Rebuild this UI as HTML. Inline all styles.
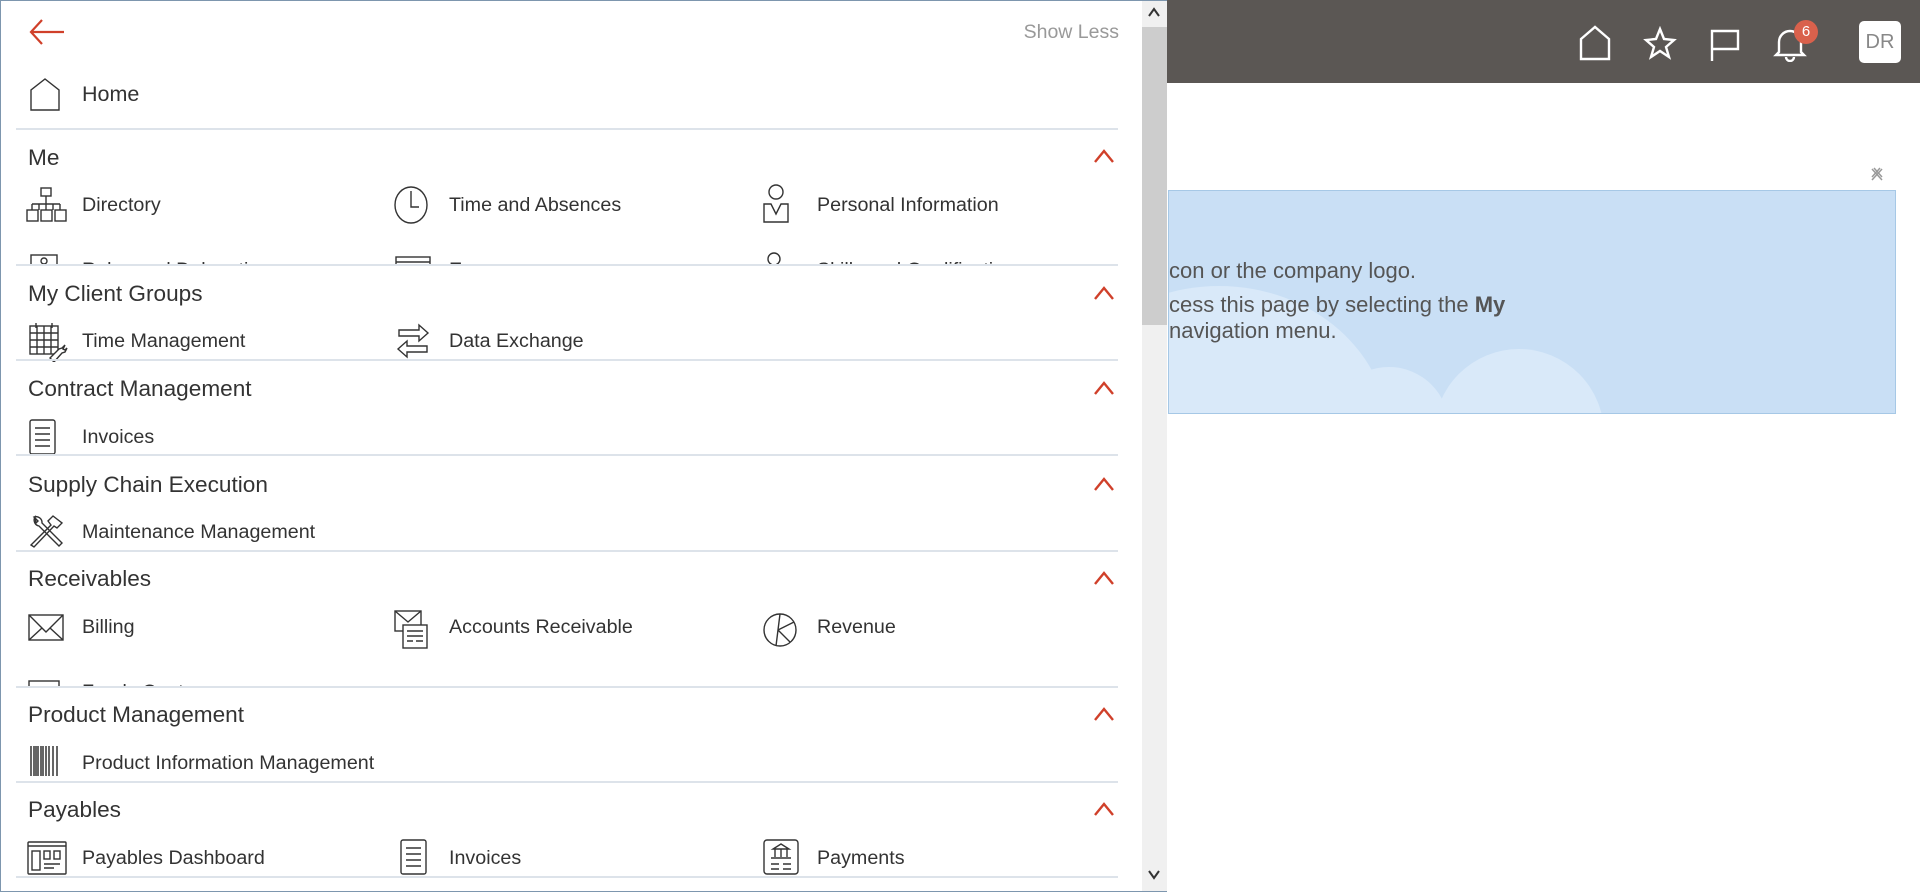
<!DOCTYPE html>
<html><head><meta charset="utf-8">
<style>
*{margin:0;padding:0;box-sizing:border-box}
body{width:1920px;height:892px;overflow:hidden;background:#fff;font-family:"Liberation Sans",Arial,sans-serif;color:#333;position:relative}
.abs{position:absolute}
.topbar{left:1167px;top:0;width:753px;height:83px;background:#5b5754}
.blue{left:1168px;top:190px;width:728px;height:224px;background:#c9dff5;border:1px solid #a6c8e6;overflow:hidden}
.cl{position:absolute;border-radius:50%;background:#d9e9f9}
.msg{font-size:22px;color:#555;white-space:nowrap}
.panel{left:0;top:0;width:1167px;height:892px;background:#fff;border:1px solid #7d96ae;border-right:none}
.sb{left:1142px;top:1px;width:25px;height:890px;background:#f0f0f0}
.thumb{left:1142px;top:27px;width:25px;height:298px;background:#cdcdcd}
.div{position:absolute;left:16px;width:1102px;height:2px;background:#dde3ea}
.sec{position:absolute;left:28px;font-size:22.6px;color:#333;line-height:26px}
.chev{position:absolute;left:1092px}
.it{position:absolute;font-size:19.7px;line-height:24px;color:#333;white-space:nowrap;margin-top:2px}
.clip{position:absolute;left:0;width:1142px;overflow:hidden}
svg.ic{position:absolute;fill:none;stroke:#333;stroke-width:1.4}
</style></head><body>

<div class="abs topbar"></div>
<svg class="abs" style="left:1578px;top:25px" width="34" height="36" viewBox="0 0 34 36" fill="none" stroke="#fff" stroke-width="2.4"><path d="M3 34V14L17 2 31 14V34Z"/></svg>
<svg class="abs" style="left:1643px;top:26px" width="34" height="34" viewBox="0 0 34 34" fill="none" stroke="#fff" stroke-width="2.4"><path d="M17 3l4 10 10 1-8 7 3 10-9-6-9 6 3-10-8-7 10-1z"/></svg>
<svg class="abs" style="left:1709px;top:28px" width="32" height="34" viewBox="0 0 32 34" fill="none" stroke="#fff" stroke-width="2.4"><path d="M3 33V3h26v18H3"/></svg>
<svg class="abs" style="left:1773px;top:26px" width="34" height="36" viewBox="0 0 34 36" fill="none" stroke="#fff" stroke-width="2.4"><path d="M6 26V16a11 11 0 0 1 22 0v10l3 3H3z"/><path d="M13 31a4 4 0 0 0 8 0"/></svg>
<div class="abs" style="left:1794px;top:20px;width:24px;height:24px;border-radius:50%;background:#d9614c;color:#fff;font-size:15px;text-align:center;line-height:24px">6</div>
<div class="abs" style="left:1859px;top:21px;width:42px;height:42px;border-radius:5px;background:#fff;color:#888;font-size:20px;text-align:center;line-height:42px">DR</div>

<div class="abs blue">
  <div class="cl" style="left:-120px;top:95px;width:340px;height:300px"></div>
  <div class="cl" style="left:160px;top:176px;width:120px;height:120px"></div>
  <div class="cl" style="left:265px;top:158px;width:170px;height:170px"></div>
  <div class="abs msg" style="left:0;top:67px">con or the company logo.</div>
  <div class="abs msg" style="left:0;top:101px">cess this page by selecting the <b>My</b></div>
  <div class="abs msg" style="left:0;top:127px">navigation menu.</div>
</div>
<svg class="abs" style="left:1870px;top:167px" width="14" height="15" viewBox="0 0 14 15" fill="none" stroke="#999" stroke-width="1.5"><path d="M2 2l10 11M12 2L2 13M4 1l8 9M10 1L2 10"/></svg>

<div class="abs panel"></div>
<div class="abs sb"></div>
<div class="abs thumb"></div>
<svg class="abs" style="left:1146px;top:6px" width="16" height="12" viewBox="0 0 16 12" fill="none" stroke="#333" stroke-width="2"><path d="M3 10L8 3l5 7"/></svg>
<svg class="abs" style="left:1146px;top:869px" width="16" height="12" viewBox="0 0 16 12" fill="none" stroke="#333" stroke-width="2"><path d="M3 2l5 7 5-7"/></svg>

<svg class="abs" style="left:28px;top:18px" width="38" height="28" viewBox="0 0 38 28" fill="none" stroke="#d0402a" stroke-width="2.2"><path d="M36 14H3M14 2L3 14l11 12"/></svg>
<div class="abs" style="left:990px;top:21px;width:129px;text-align:right;font-size:19.5px;color:#999">Show Less</div>

<svg class="ic" style="left:29px;top:78px" width="36" height="34" viewBox="0 0 36 34"><path d="M2 32V12L16 1 30 12V32Z"/></svg>
<div class="it" style="left:82px;top:80px;font-size:21.5px">Home</div>
<div class="div" style="top:128px"></div>

<div class="clip" style="top:130px;height:135px">
 <div class="sec" style="top:15px">Me</div>
 <svg class="ic" style="left:25px;top:57px" width="44" height="36" viewBox="0 0 44 36"><rect x="16" y="1" width="10" height="8"/><path d="M21 9v8M7 17h28M7 17v6M21 17v6M35 17v6M14 17v6M28 17v6"/><rect x="2" y="23" width="11" height="11"/><rect x="16" y="23" width="11" height="11"/><rect x="30" y="23" width="11" height="11"/></svg>
 <div class="it" style="left:82px;top:61px">Directory</div>
 <svg class="ic" style="left:393px;top:55px" width="38" height="40" viewBox="0 0 38 40"><ellipse cx="18" cy="20" rx="16" ry="18"/><path d="M18 6v16h8"/></svg>
 <div class="it" style="left:449px;top:61px">Time and Absences</div>
 <svg class="ic" style="left:761px;top:54px" width="30" height="40" viewBox="0 0 30 40"><circle cx="15" cy="8" r="7"/><path d="M3 38V20h7l5 10 5-10h7v18z"/></svg>
 <div class="it" style="left:817px;top:61px">Personal Information</div>
 <svg class="ic" style="left:29px;top:123px" width="32" height="20" viewBox="0 0 32 20"><rect x="2" y="2" width="26" height="20"/><circle cx="15" cy="8" r="3"/></svg>
 <div class="it" style="left:82px;top:126px">Roles and Delegations</div>
 <svg class="ic" style="left:394px;top:125px" width="40" height="20" viewBox="0 0 40 20"><rect x="2" y="2" width="34" height="20"/><path d="M2 7h34"/></svg>
 <div class="it" style="left:449px;top:126px">Expenses</div>
 <svg class="ic" style="left:762px;top:120px" width="30" height="20" viewBox="0 0 30 20"><circle cx="12" cy="9" r="6"/></svg>
 <div class="it" style="left:817px;top:126px">Skills and Qualifications</div>
</div>
<div class="div" style="top:264px"></div>
<svg class="chev" style="top:148px" width="24" height="16" viewBox="0 0 24 16" fill="none" stroke="#d0402a" stroke-width="2.4"><path d="M3 14l9-11 9 11"/></svg>

<div class="sec" style="top:281px">My Client Groups</div>
<svg class="chev" style="top:285px" width="24" height="16" viewBox="0 0 24 16" fill="none" stroke="#d0402a" stroke-width="2.4"><path d="M3 14l9-11 9 11"/></svg>
<svg class="ic" style="left:28px;top:322px" width="40" height="40" viewBox="0 0 40 40"><rect x="2" y="4" width="28" height="28"/><path d="M2 11h28M2 18h28M2 25h28M9 4v28M16 4v28M23 4v28M8 1v5M24 1v5"/><path d="M22 36l9-9 3-1 3-3-2 4 2 1 2-2-2 4-3 1-8 9z" fill="#fff"/></svg>
<div class="it" style="left:82px;top:327px">Time Management</div>
<svg class="ic" style="left:396px;top:322px" width="34" height="38" viewBox="0 0 34 38"><path d="M3 8h20V3l9 8-9 8v-5H3zM31 24H11v-5l-9 8 9 8v-5h20z"/></svg>
<div class="it" style="left:449px;top:327px">Data Exchange</div>
<div class="div" style="top:359px"></div>

<div class="sec" style="top:376px">Contract Management</div>
<svg class="chev" style="top:380px" width="24" height="16" viewBox="0 0 24 16" fill="none" stroke="#d0402a" stroke-width="2.4"><path d="M3 14l9-11 9 11"/></svg>
<svg class="ic" style="left:28px;top:418px" width="30" height="38" viewBox="0 0 30 38"><rect x="2" y="2" width="25" height="34" rx="2"/><path d="M7 10h15M7 16h15M7 22h15M7 28h15"/></svg>
<div class="it" style="left:82px;top:423px">Invoices</div>
<div class="div" style="top:454px"></div>

<div class="sec" style="top:472px">Supply Chain Execution</div>
<svg class="chev" style="top:476px" width="24" height="16" viewBox="0 0 24 16" fill="none" stroke="#d0402a" stroke-width="2.4"><path d="M3 14l9-11 9 11"/></svg>
<svg class="ic" style="left:27px;top:513px" width="38" height="38" viewBox="0 0 38 38"><path d="M4 32l20-20-3-4 5-5 9 7-5 5-3-2-20 21z"/><path d="M8 4a6 6 0 0 0 4 9l20 20 3-3-20-20a6 6 0 0 0-8-6l4 4-2 2z"/></svg>
<div class="it" style="left:82px;top:518px">Maintenance Management</div>
<div class="div" style="top:550px"></div>

<div class="clip" style="top:552px;height:135px">
 <div class="sec" style="top:14px">Receivables</div>
 <svg class="ic" style="left:27px;top:61px" width="38" height="30" viewBox="0 0 38 30"><rect x="2" y="2" width="34" height="25"/><path d="M2 2l17 17L36 2M2 27l13-12M36 27L23 15"/></svg>
 <div class="it" style="left:82px;top:61px">Billing</div>
 <svg class="ic" style="left:393px;top:57px" width="42" height="42" viewBox="0 0 42 42"><rect x="2" y="2" width="26" height="20"/><path d="M2 2l13 11L28 2"/><rect x="10" y="16" width="24" height="23" fill="#fff"/><path d="M14 22h16M14 27h16M14 32h6M23 32h7"/></svg>
 <div class="it" style="left:449px;top:61px">Accounts Receivable</div>
 <svg class="ic" style="left:761px;top:59px" width="38" height="38" viewBox="0 0 38 38"><circle cx="19" cy="19" r="16"/><path d="M19 3L15 35M17 19l16-8M17 19l12 12"/></svg>
 <div class="it" style="left:817px;top:61px">Revenue</div>
 <svg class="ic" style="left:27px;top:127px" width="34" height="20" viewBox="0 0 34 20"><rect x="2" y="2" width="30" height="20"/></svg>
 <div class="it" style="left:82px;top:126px">Funds Capture</div>
</div>
<div class="div" style="top:686px"></div>
<svg class="chev" style="top:570px" width="24" height="16" viewBox="0 0 24 16" fill="none" stroke="#d0402a" stroke-width="2.4"><path d="M3 14l9-11 9 11"/></svg>

<div class="sec" style="top:702px">Product Management</div>
<svg class="chev" style="top:706px" width="24" height="16" viewBox="0 0 24 16" fill="none" stroke="#d0402a" stroke-width="2.4"><path d="M3 14l9-11 9 11"/></svg>
<svg class="abs" style="left:29px;top:746px" width="36" height="30" viewBox="0 0 36 30" stroke="#333"><path d="M2 0v30M5 0v30M7 0v30M9 0v30M12 0v30M14 0v30M17 0v30M20 0v30M24 0v30M28 0v30" stroke-width="1.5"/></svg>
<div class="it" style="left:82px;top:749px">Product Information Management</div>
<div class="div" style="top:781px"></div>

<div class="sec" style="top:797px">Payables</div>
<svg class="chev" style="top:801px" width="24" height="16" viewBox="0 0 24 16" fill="none" stroke="#d0402a" stroke-width="2.4"><path d="M3 14l9-11 9 11"/></svg>
<svg class="ic" style="left:26px;top:840px" width="42" height="36" viewBox="0 0 42 36"><rect x="2" y="2" width="38" height="32" rx="1"/><path d="M2 6h38"/><rect x="6" y="11" width="8" height="19"/><rect x="18" y="11" width="6" height="8"/><rect x="28" y="11" width="6" height="8"/><path d="M18 24h16M18 28h10"/></svg>
<div class="it" style="left:82px;top:844px">Payables Dashboard</div>
<svg class="ic" style="left:399px;top:838px" width="30" height="38" viewBox="0 0 30 38"><rect x="2" y="2" width="25" height="34" rx="2"/><path d="M7 10h15M7 16h15M7 22h15M7 28h15"/></svg>
<div class="it" style="left:449px;top:844px">Invoices</div>
<svg class="ic" style="left:762px;top:838px" width="40" height="38" viewBox="0 0 40 38"><rect x="2" y="2" width="34" height="34" rx="3"/><path d="M19 6l-8 5h16zM13 11v8M19 11v8M25 11v8M9 20h20M9 26h8M21 26h8M9 31h8M21 31h8"/></svg>
<div class="it" style="left:817px;top:844px">Payments</div>
<div class="div" style="top:876px"></div>

</body></html>
